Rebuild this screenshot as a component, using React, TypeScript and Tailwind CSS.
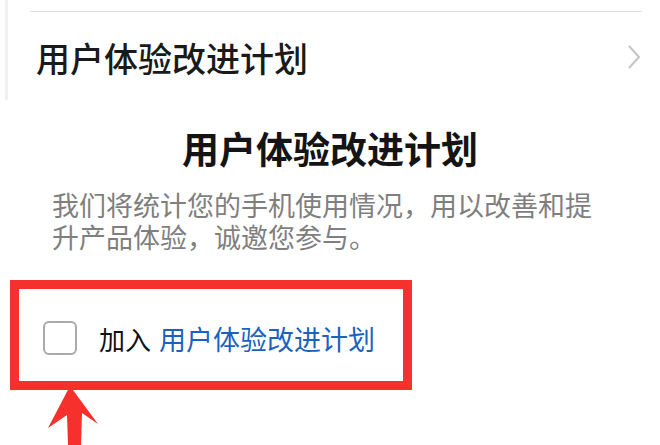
const font = { fontFamily: '"Noto Sans CJK SC", "Noto Sans", sans-serif' };

export default function App() {
  return (
    <div
      className="relative h-[445px] w-[660px] overflow-hidden bg-white"
      style={font}
    >
      {/* settings row behind the dialog */}
      <div className="ml-[5px] h-[100px] border-l-[3px] border-[#f0f0f0] pl-[22px] pr-[18px] pt-[11px]">
        <div className="flex h-[89px] items-center justify-between border-t border-[#dedede] pl-[6px] pt-[4px]">
          <span className="text-[34px] font-medium leading-none text-[#1a1a1a]">
            用户体验改进计划
          </span>
          <svg width="16" height="26" viewBox="0 0 16 26" className="-mt-[2px]">
            <path
              d="M3 2 L13 13 L3 24"
              fill="none"
              stroke="#c4c4c4"
              strokeWidth="2"
            />
          </svg>
        </div>
      </div>

      {/* dialog */}
      <div className="flex flex-col">
        <h3 className="mt-[26px] text-center text-[37px] font-bold leading-[44px] text-[#141414]">
          用户体验改进计划
        </h3>
        <p className="mt-[19px] w-[600px] pl-[52px] text-[27px] leading-[32px] text-[#7f7f7f]">
          我们将统计您的手机使用情况，用以改善和提升产品体验，诚邀您参与。
        </p>
        <div className="ml-[10px] mt-[27px] flex h-[110px] w-[402px] items-center border-[9px] border-[#f5302d] pl-[24px] pt-[6px]">
          <div className="h-[34px] w-[34px] rounded-[6px] border-2 border-[#a9a9a9]" />
          <span className="ml-[22px] text-[26px] leading-none text-[#111]">
            加入
            <span className="ml-[8px] text-[27px] text-[#1b62c0]">
              用户体验改进计划
            </span>
          </span>
        </div>
      </div>

      {/* arrow */}
      <svg
        width="120"
        height="65"
        viewBox="0 0 120 65"
        className="absolute left-0 top-[380px]"
      >
        <polygon
          points="70,6 98,44 82,33 81,65 68,65 67,35 48,48"
          fill="#f5302d"
        />
      </svg>
    </div>
  );
}
